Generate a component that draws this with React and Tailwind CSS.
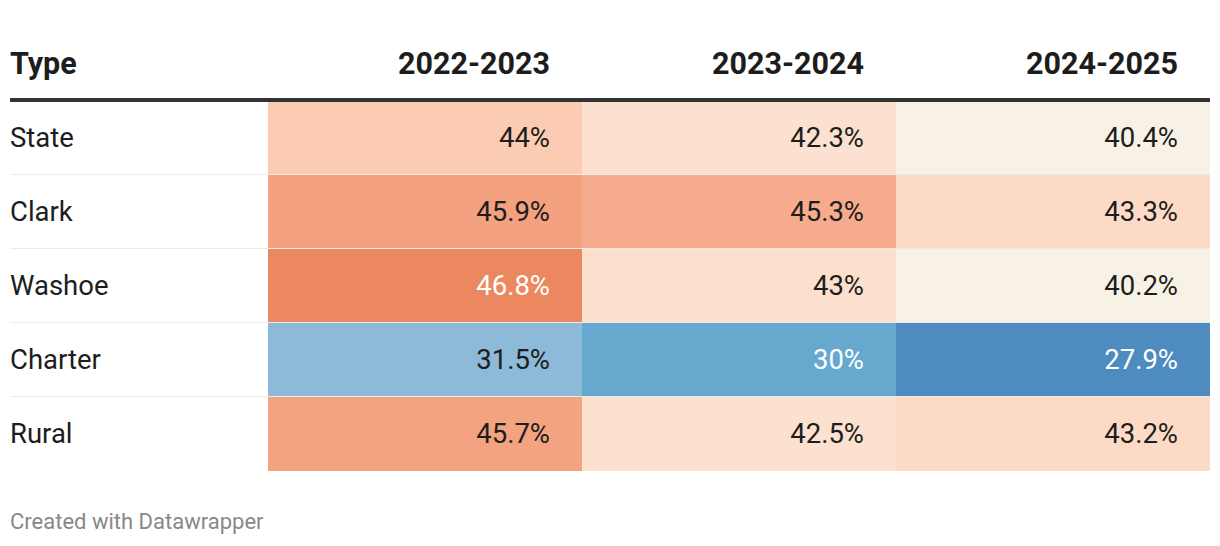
import React from "react";

const rows = [
  { name: "State", cells: [["44%", "#fbcbb2", false], ["42.3%", "#fce1d0", false], ["40.4%", "#f7f2e5", false]] },
  { name: "Clark", cells: [["45.9%", "#f3a17e", false], ["45.3%", "#f6ac8c", false], ["43.3%", "#fcdac5", false]] },
  { name: "Washoe", cells: [["46.8%", "#ec8860", true], ["43%", "#fce0cd", false], ["40.2%", "#f7f2e5", false]] },
  { name: "Charter", cells: [["31.5%", "#8cbad8", false], ["30%", "#67a8cf", true], ["27.9%", "#4e8bbf", true]] },
  { name: "Rural", cells: [["45.7%", "#f3a37f", false], ["42.5%", "#fce1d0", false], ["43.2%", "#fcdac5", false]] },
];

const years = ["2022-2023", "2023-2024", "2024-2025"];

export default function App() {
  return (
    <div className="w-[1220px] h-[546px] bg-white px-[10px] font-['Roboto',sans-serif] text-[#1d1d1d]">
      {/* header */}
      <div className="flex h-[98px] items-end pb-[19px] text-[30.5px] font-bold leading-[30px]">
        <div className="w-[258px]">Type</div>
        {years.map((y) => (
          <div key={y} className="w-[314px] pr-[32px] text-right">{y}</div>
        ))}
      </div>
      <div className="h-[4px] bg-[#333333]" />

      {/* body */}
      <div>
        {rows.map((r, i) => (
          <div
            key={r.name}
            className={`flex text-[27.5px] ${i === 0 ? "h-[73px]" : "h-[74px]"} ${i < rows.length - 1 ? "border-b border-black/[0.08]" : "h-[73px]"}`}
          >
            <div className="flex w-[258px] items-center">{r.name}</div>
            {r.cells.map(([v, bg, light], j) => (
              <div
                key={j}
                className={`flex w-[314px] items-center justify-end pr-[32px] ${light ? "text-white" : ""}`}
                style={{ backgroundColor: bg }}
              >
                {v}
              </div>
            ))}
          </div>
        ))}
      </div>

      <div className="mt-[39px] text-[22px] leading-[24px] text-[#888888]">Created with Datawrapper</div>
    </div>
  );
}
